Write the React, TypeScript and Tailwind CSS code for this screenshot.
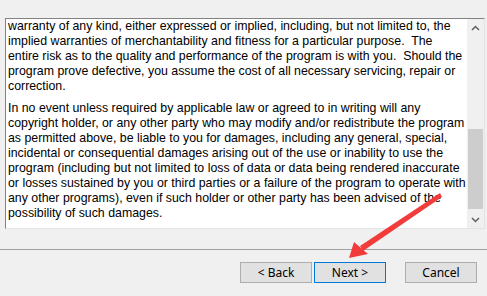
import React from "react";

const p1 = [
  "warranty of any kind, either expressed or implied, including, but not limited to, the",
  "implied warranties of merchantability and fitness for a particular purpose.  The",
  "entire risk as to the quality and performance of the program is with you.  Should the",
  "program prove defective, you assume the cost of all necessary servicing, repair or",
  "correction.",
];
const p2 = [
  "In no event unless required by applicable law or agreed to in writing will any",
  "copyright holder, or any other party who may modify and/or redistribute the program",
  "as permitted above, be liable to you for damages, including any general, special,",
  "incidental or consequential damages arising out of the use or inability to use the",
  "program (including but not limited to loss of data or data being rendered inaccurate",
  "or losses sustained by you or third parties or a failure of the program to operate with",
  "any other programs), even if such holder or other party has been advised of the",
  "possibility of such damages.",
];

function Btn({ label, focused }: { label: string; focused?: boolean }) {
  return (
    <div
      className={
        "w-[72px] h-[21px] flex items-center justify-center bg-[#e1e1e1] border text-[12px] text-black " +
        (focused ? "border-[#0078d7]" : "border-[#adadad]")
      }
      style={{ fontFamily: '"Noto Sans", "Open Sans", sans-serif' }}
    >
      {label}
    </div>
  );
}

export default function App() {
  return (
    <div className="relative w-[487px] h-[296px] bg-[#f0f0f0] overflow-hidden">
      <div className="pt-[18px] pl-[5px]">
        <div className="w-[480px] h-[211px] bg-white border-t border-l border-[#828282] border-b border-b-[#e3e3e3] border-r border-r-[#e3e3e3] flex overflow-hidden">
          <div
            className="flex-1 pl-[2px] overflow-hidden text-[12.35px] leading-[15px] text-black"
            style={{ fontFamily: '"Liberation Sans", Arial, sans-serif' }}
          >
            <div className="mb-[7px]">
              {p1.map((l, i) => (
                <div key={i} className="whitespace-pre">{l}</div>
              ))}
            </div>
            <div>
              {p2.map((l, i) => (
                <div key={i} className="whitespace-pre">{l}</div>
              ))}
            </div>
          </div>
          <div className="w-[17px] h-full bg-[#f0f0f0] flex flex-col">
            <div className="h-[17px] flex items-center justify-center">
              <svg width="9" height="6" viewBox="0 0 9 6">
                <path d="M1 5 L4.5 1.5 L8 5" stroke="#606060" strokeWidth="1.5" fill="none" />
              </svg>
            </div>
            <div className="flex-1 flex flex-col">
              <div className="h-[93px]" />
              <div className="h-[80px] mx-px bg-[#cdcdcd]" />
              <div className="flex-1" />
            </div>
            <div className="h-[17px] flex items-center justify-center">
              <svg width="9" height="6" viewBox="0 0 9 6">
                <path d="M1 1 L4.5 4.5 L8 1" stroke="#606060" strokeWidth="1.5" fill="none" />
              </svg>
            </div>
          </div>
        </div>
      </div>
      <div className="mt-[20px] h-px bg-[#a0a0a0]" />
      <div className="mt-[12px] flex pl-[240px]">
        <Btn label="< Back" />
        <div className="w-[2px]" />
        <Btn label="Next >" focused />
        <div className="w-[19px]" />
        <Btn label="Cancel" />
      </div>
      <svg className="absolute left-0 top-0 pointer-events-none" width="487" height="296">
        <polygon points="440,193 442,197 363,251 360,246" fill="#f23b3b" />
        <polygon points="349,258 354,242 368,254" fill="#f23b3b" />
      </svg>
    </div>
  );
}
